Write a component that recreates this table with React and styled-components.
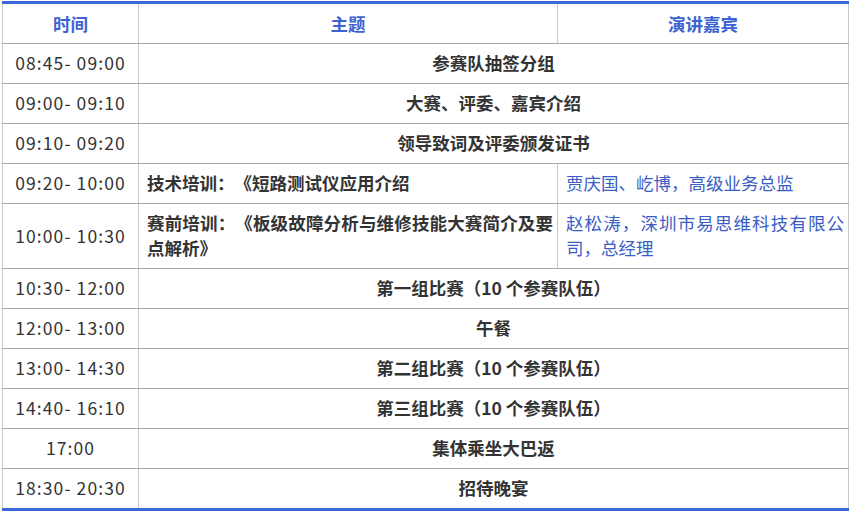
import React from "react";
import styled, { createGlobalStyle } from "styled-components";

const Global = createGlobalStyle`
  html, body { margin: 0; padding: 0; background: #fff; }
  body { font-family: "Noto Sans CJK SC", "Noto Sans", sans-serif; }
`;

const Wrap = styled.div`
  padding: 1px 3px 0 2px;
`;

const Table = styled.table`
  width: 846px;
  border-collapse: collapse;
  table-layout: fixed;
  border-top: 3px solid #3a67d6;
  border-bottom: 3px solid #3a67d6;
  border-left: 1px solid #c8c8c8;
  border-right: 1px solid #c8c8c8;
  font-size: 17.5px;
  color: #333;
  text-spacing-trim: space-all;
`;

const Th = styled.th`
  height: 37px;
  padding: 1px 0 1px;
  font-weight: 700;
  color: #3d63d2;
  text-align: center;
  border-right: 1px solid #c8c8c8;
  border-bottom: 1px solid #a9a9a9;
  &:last-child { border-right: none; }
`;

const Tr = styled.tr``;

const Td = styled.td`
  padding: ${(p) => (p.$align === "left" ? "6px 4px 8px 8px" : "6px 4px 8px")};
  line-height: 25px;
  height: 25px;
  border-right: 1px solid #c8c8c8;
  border-bottom: 1px solid #a9a9a9;
  text-align: ${(p) => (p.$align === "left" ? "justify" : "center")};
  font-weight: ${(p) => (p.$bold ? 700 : 400)};
  color: ${(p) => (p.$blue ? "#3a5ec6" : "#333")};
  vertical-align: middle;
  &:last-child { border-right: none; }
`;

const TimeTd = styled(Td)`
  padding: 6px 2px 8px;
  letter-spacing: 1.1px;
  color: #333;
`;

const rows = [
  { t: "08:45- 09:00", topic: "参赛队抽签分组" },
  { t: "09:00- 09:10", topic: "大赛、评委、嘉宾介绍" },
  { t: "09:10- 09:20", topic: "领导致词及评委颁发证书" },
  { t: "09:20- 10:00", topic: "技术培训：《短路测试仪应用介绍", speaker: "贾庆国、屹博，高级业务总监" },
  {
    t: "10:00- 10:30",
    topic: "赛前培训：《板级故障分析与维修技能大赛简介及要点解析》",
    speaker: "赵松涛，深圳市易思维科技有限公司，总经理",
  },
  { t: "10:30- 12:00", topic: "第一组比赛（10 个参赛队伍）" },
  { t: "12:00- 13:00", topic: "午餐" },
  { t: "13:00- 14:30", topic: "第二组比赛（10 个参赛队伍）" },
  { t: "14:40- 16:10", topic: "第三组比赛（10 个参赛队伍）" },
  { t: "17:00", topic: "集体乘坐大巴返" },
  { t: "18:30- 20:30", topic: "招待晚宴" },
];

export default function App() {
  return (
    <>
      <Global />
      <Wrap>
        <Table>
          <colgroup>
            <col style={{ width: 136 }} />
            <col style={{ width: 419 }} />
            <col style={{ width: 291 }} />
          </colgroup>
          <thead>
            <tr>
              <Th>时间</Th>
              <Th>主题</Th>
              <Th>演讲嘉宾</Th>
            </tr>
          </thead>
          <tbody>
            {rows.map((r) => (
              <Tr key={r.t}>
                <TimeTd>{r.t}</TimeTd>
                {r.speaker ? (
                  <>
                    <Td $bold $align="left">{r.topic}</Td>
                    <Td $blue $align="left">{r.speaker}</Td>
                  </>
                ) : (
                  <Td $bold colSpan={2}>{r.topic}</Td>
                )}
              </Tr>
            ))}
          </tbody>
        </Table>
      </Wrap>
    </>
  );
}
